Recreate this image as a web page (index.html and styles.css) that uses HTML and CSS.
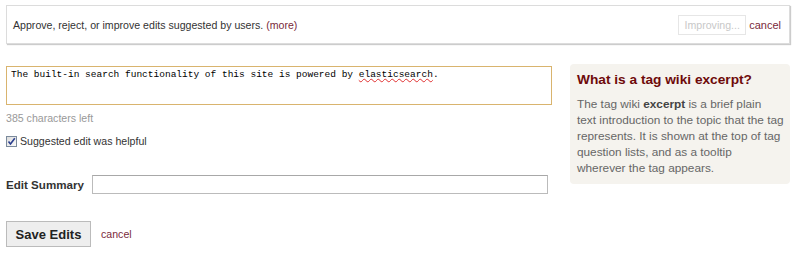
FILE: index.html
```html
<!DOCTYPE html>
<html>
<head>
<meta charset="utf-8">
<link rel="stylesheet" href="styles.css">
</head>
<body>
<div class="page">
  <div class="notice">
    <span class="notice-text">Approve, reject, or improve edits suggested by users. <a class="link" href="#">(more)</a></span>
    <span class="notice-actions">
      <button class="btn-disabled" disabled>Improving...</button>
      <a class="link cancel-top" href="#">cancel</a>
    </span>
  </div>
  <div class="main">
    <div class="editor">
      <div class="textarea">The built-in search functionality of this site is powered by <span class="misspelled">elasticsearch</span>.</div>
      <div class="chars-left">385 characters left</div>
      <label class="helpful"><span class="check"><svg width="9" height="9" viewBox="0 0 9 9"><path d="M1.5 4.5 L3.5 7 L7.8 1.2" fill="none" stroke="#2b3f8f" stroke-width="1.6"/></svg></span>Suggested edit was helpful</label>
      <div class="summary-row">
        <span class="summary-label">Edit Summary</span>
        <span class="summary-input"></span>
      </div>
      <div class="actions">
        <button class="btn-save">Save Edits</button>
        <a class="link cancel-bottom" href="#">cancel</a>
      </div>
    </div>
    <div class="sidebar">
      <h3 class="side-title">What is a tag wiki excerpt?</h3>
      <p class="side-text">The tag wiki <b>excerpt</b> is a brief plain<br>text introduction to the topic that the tag<br>represents. It is shown at the top of tag<br>question lists, and as a tooltip<br>wherever the tag appears.</p>
    </div>
  </div>
</div>
</body>
</html>
```
FILE: styles.css
```css
html, body {
  margin: 0;
  padding: 0;
  background: #fff;
}
.page {
  padding: 5px 10px 0 6px;
  font-family: "Liberation Sans", Arial, sans-serif;
  font-size: 11px;
  color: #333;
}
.link {
  color: #7a2a3a;
  text-decoration: none;
}
.notice {
  display: flex;
  justify-content: space-between;
  align-items: center;
  height: 37px;
  border: 1px solid #dcdcdc;
  box-shadow: 1px 1px 1px #ccc;
  padding: 0 8px 0 6px;
}
.notice-text {
  color: #333;
  font-size: 10.6px;
}
.notice-actions {
  display: flex;
  align-items: center;
}
.btn-disabled {
  width: 68px;
  height: 20px;
  font-family: "Liberation Sans", Arial, sans-serif;
  font-size: 10.6px;
  color: #c8c8c8;
  background: #fff;
  border: 1px solid #e6e6e6;
  padding: 0;
  margin-right: 3px;
}
.cancel-top {
  font-size: 11px;
}
.main {
  display: flex;
  margin-top: 22px;
}
.editor {
  width: 546px;
}
.textarea {
  height: 35px;
  border: 1px solid #d9b46e;
  padding: 1px 4px;
  font-family: "Liberation Mono", monospace;
  font-size: 9.5px;
  line-height: 14px;
  color: #000;
}
.misspelled {
  text-decoration: underline wavy #e03030;
  text-decoration-thickness: 1px;
}
.chars-left {
  margin-top: 7px;
  color: #999;
  font-size: 10.6px;
}
.helpful {
  display: flex;
  align-items: center;
  margin-top: 11px;
  font-size: 10.6px;
  color: #333;
}
.check {
  display: flex;
  align-items: center;
  justify-content: center;
  width: 11px;
  height: 11px;
  box-sizing: border-box;
  border: 1px solid #7b8a9c;
  background: linear-gradient(135deg, #dcdcdc, #fbfbfb);
  margin: 0 3px 0 0;
}
.summary-row {
  display: flex;
  align-items: center;
  margin-top: 28px;
}
.summary-label {
  font-weight: bold;
  font-size: 11.6px;
  color: #333;
  width: 86px;
}
.summary-input {
  width: 454px;
  height: 17px;
  border: 1px solid #bbb;
  border-top-color: #a8a8a8;
}
.actions {
  display: flex;
  align-items: center;
  margin-top: 27px;
}
.btn-save {
  width: 85px;
  height: 26px;
  font-family: "Liberation Sans", Arial, sans-serif;
  font-size: 13px;
  font-weight: bold;
  color: #222;
  background: #eee;
  border: 1px solid #bbb;
  padding: 0;
  margin-right: 10px;
}
.cancel-bottom {
  font-size: 10.6px;
}
.sidebar {
  width: 210px;
  margin-left: 18px;
  margin-top: -2px;
  align-self: flex-start;
  background: #f5f3ee;
  border-radius: 4px;
  padding: 8px 3px 8px 7px;
}
.side-title {
  margin: 0 0 9px 0;
  font-size: 13.7px;
  font-weight: bold;
  color: #6e0a0a;
}
.side-text {
  margin: 0;
  font-size: 11.8px;
  line-height: 16px;
  color: #666;
  white-space: nowrap;
}
.side-text b {
  color: #444;
}
```
